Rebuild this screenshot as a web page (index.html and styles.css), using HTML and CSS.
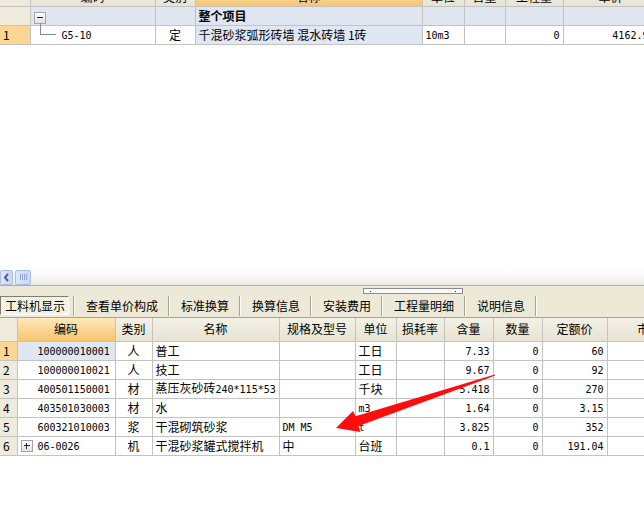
FILE: index.html
```html
<!DOCTYPE html>
<html lang="zh">
<head>
<meta charset="utf-8">
<title>工料机显示</title>
<link rel="stylesheet" href="styles.css">
</head>
<body>
<div class="page">
  <div class="top-pane">
    <table class="grid top-grid">
      <colgroup>
        <col class="w30"><col class="w125"><col class="w40"><col class="w227"><col class="w42"><col class="w41"><col class="w58"><col class="w95">
      </colgroup>
      <tr class="hdr">
        <th class="rn"></th><th>编码</th><th>类别</th><th class="sel">名称</th><th>单位</th><th>含量</th><th>工程量</th><th>单价</th>
      </tr>
      <tr class="group">
        <td class="rn"></td>
        <td class="code"><span class="tbox minus"></span></td>
        <td></td>
        <td class="bold">整个项目</td>
        <td></td><td></td><td></td><td></td>
      </tr>
      <tr>
        <td class="rn cur">1</td>
        <td class="code tree"><span class="elbow"></span><span class="m">G5-10</span></td>
        <td class="c">定</td>
        <td class="blue">千混砂浆弧形砖墙 混水砖墙 1砖</td>
        <td><span class="m">10m3</span></td>
        <td></td>
        <td class="r"><span class="m">0</span></td>
        <td class="r"><span class="m">4162.95</span></td>
      </tr>
    </table>
  </div>

  <div class="hscroll">
    <span class="sbtn"><svg width="7" height="9" viewBox="0 0 7 9"><path d="M5 1 L2 4.5 L5 8" fill="none" stroke="#4d6185" stroke-width="2"/></svg></span>
    <span class="sthumb"><i></i><i></i><i></i><i></i></span>
  </div>

  <div class="tabs">
    <span class="splitter"><i></i><i></i></span>
    <div class="tab first"><span class="active">工料机显示</span></div>
    <div class="tab">查看单价构成</div>
    <div class="tab">标准换算</div>
    <div class="tab">换算信息</div>
    <div class="tab">安装费用</div>
    <div class="tab">工程量明细</div>
    <div class="tab">说明信息</div>
  </div>

  <div class="bottom-pane">
    <table class="grid bot-grid">
      <colgroup>
        <col class="w17"><col class="w98"><col class="w37"><col class="w127"><col class="w76"><col class="w41"><col class="w48"><col class="w49"><col class="w49"><col class="w65"><col class="w96">
      </colgroup>
      <tr class="hdr">
        <th class="rn"></th><th class="sel">编码</th><th>类别</th><th>名称</th><th>规格及型号</th><th>单位</th><th>损耗率</th><th>含量</th><th>数量</th><th>定额价</th><th>市场价</th>
      </tr>
      <tr>
        <td class="rn cur">1</td><td class="code blue"><span class="m">100000010001</span></td><td class="c">人</td><td>普工</td><td></td><td>工日</td><td></td><td class="r"><span class="m">7.33</span></td><td class="r"><span class="m">0</span></td><td class="r"><span class="m">60</span></td><td></td>
      </tr>
      <tr>
        <td class="rn">2</td><td class="code"><span class="m">100000010021</span></td><td class="c">人</td><td>技工</td><td></td><td>工日</td><td></td><td class="r"><span class="m">9.67</span></td><td class="r"><span class="m">0</span></td><td class="r"><span class="m">92</span></td><td></td>
      </tr>
      <tr>
        <td class="rn">3</td><td class="code"><span class="m">400501150001</span></td><td class="c">材</td><td>蒸压灰砂砖<span class="m">240*115*53</span></td><td></td><td>千块</td><td></td><td class="r"><span class="m">5.418</span></td><td class="r"><span class="m">0</span></td><td class="r"><span class="m">270</span></td><td></td>
      </tr>
      <tr>
        <td class="rn">4</td><td class="code"><span class="m">403501030003</span></td><td class="c">材</td><td>水</td><td></td><td><span class="m">m3</span></td><td></td><td class="r"><span class="m">1.64</span></td><td class="r"><span class="m">0</span></td><td class="r"><span class="m">3.15</span></td><td></td>
      </tr>
      <tr>
        <td class="rn">5</td><td class="code"><span class="m">600321010003</span></td><td class="c">浆</td><td>干混砌筑砂浆</td><td><span class="m">DM M5</span></td><td><span class="m">t</span></td><td></td><td class="r"><span class="m">3.825</span></td><td class="r"><span class="m">0</span></td><td class="r"><span class="m">352</span></td><td></td>
      </tr>
      <tr>
        <td class="rn">6</td><td class="code plus-row"><span class="tbox plus"></span><span class="m">06-0026</span></td><td class="c">机</td><td>干混砂浆罐式搅拌机</td><td>中</td><td>台班</td><td></td><td class="r"><span class="m">0.1</span></td><td class="r"><span class="m">0</span></td><td class="r"><span class="m">191.04</span></td><td></td>
      </tr>
    </table>
  </div>

  <svg class="arrow" width="644" height="530" viewBox="0 0 644 530">
    <polygon points="336,428 353,411 355.5,416.2 494.8,374.4 495.3,375.6 358.6,426 360.5,432" fill="#ff0d0d"/>
  </svg>
</div>
</body>
</html>
```

FILE: styles.css
```css
* { box-sizing: border-box; }

body {
  margin: 0;
  background: #fff;
  font-family: "Noto Sans CJK SC", "Noto Sans", sans-serif;
  font-size: 12px;
  color: #000;
}

.page {
  position: relative;
  width: 644px;
  height: 530px;
  overflow: hidden;
}

/* ---------- grids ---------- */
.grid {
  border-collapse: collapse;
  table-layout: fixed;
}

.grid th,
.grid td {
  border: 1px solid #c3c3c3;
  padding: 0 3px;
  height: 19px;
  line-height: 16px;
  white-space: nowrap;
  overflow: hidden;
  font-weight: normal;
  text-align: left;
  vertical-align: middle;
}

.grid th {
  text-align: center;
  background: linear-gradient(#f3f1e6, #e6e3d2);
}

.grid th.sel {
  background: linear-gradient(#fee8bd, #f6c46c);
}

.grid .rn {
  border-left: 0;
  background: #eeebdc;
  padding-left: 3px;
}

.grid .rn.cur {
  background: #fdd694;
}

.grid .c { text-align: center; }
.grid .r { text-align: right; }
.grid .blue { background: #dfe7f3; }
.grid .bold { font-weight: bold; }

.m {
  font-family: "DejaVu Sans Mono", "Liberation Mono", monospace;
  font-size: 10px;
}

col.w17 { width: 17px; }
col.w30 { width: 30px; }
col.w37 { width: 37px; }
col.w40 { width: 40px; }
col.w41 { width: 41px; }
col.w42 { width: 42px; }
col.w48 { width: 48px; }
col.w49 { width: 49px; }
col.w58 { width: 58px; }
col.w65 { width: 65px; }
col.w76 { width: 76px; }
col.w95 { width: 95px; }
col.w96 { width: 96px; }
col.w98 { width: 98px; }
col.w125 { width: 125px; }
col.w127 { width: 127px; }
col.w227 { width: 227px; }

/* ---------- top pane ---------- */
.top-pane {
  height: 269px;
  overflow: hidden;
}

.top-grid {
  width: 658px;
  margin-top: -13px;
}

.top-grid tr.group td { background: #dfe6f0; }
.top-grid tr.group td.rn { background: #eeebdc; }

.top-grid td.tree {
  position: relative;
  padding-left: 31px;
  overflow: visible;
}

.elbow {
  position: absolute;
  left: 9px;
  top: -3px;
  width: 16px;
  height: 12px;
  border-left: 1px solid #8a8a8a;
  border-bottom: 1px solid #8a8a8a;
}

.tbox {
  display: inline-block;
  position: relative;
  width: 12px;
  height: 12px;
  border: 1px solid #a4a4a4;
  background: linear-gradient(#ffffff, #e2e2e2);
  vertical-align: middle;
}

.tbox::before {
  content: "";
  position: absolute;
  left: 2px;
  top: 4px;
  width: 6px;
  height: 1px;
  background: #222;
}

.tbox.plus::after {
  content: "";
  position: absolute;
  left: 4px;
  top: 2px;
  width: 1px;
  height: 6px;
  background: #222;
}

/* ---------- horizontal scrollbar ---------- */
.hscroll {
  height: 17px;
  display: flex;
  align-items: center;
  gap: 2px;
  background: linear-gradient(#ffffff, #f6f5f0 60%, #ecebe4);
  border-bottom: 1px solid #9cb0c8;
}

.sbtn,
.sthumb {
  height: 15px;
  border: 1px solid #a9bde6;
  border-radius: 2px;
  background: linear-gradient(90deg, #dde7fc, #c6d6fb);
  display: flex;
  align-items: center;
  justify-content: center;
}

.sbtn { width: 13px; }

.sthumb {
  width: 16px;
  gap: 1px;
}

.sthumb i {
  display: block;
  width: 1px;
  height: 6px;
  background: #8ea6d8;
}

/* ---------- tabs ---------- */
.tabs {
  position: relative;
  height: 32px;
  background: #ece9d8;
  border-bottom: 1px solid #8fa5bf;
  display: flex;
  align-items: flex-end;
  padding-bottom: 1px;
}

.tab {
  height: 20px;
  line-height: 19px;
  padding: 0 10px 0 11px;
  border-right: 1px solid #a6a493;
  box-shadow: 1px 0 0 #fbfaf5;
  margin-right: 1px;
  white-space: nowrap;
}

.tab.first {
  width: 74px;
  padding: 0;
}

.tab .active {
  display: block;
  width: 69px;
  height: 19px;
  padding-left: 4px;
  border: 1px solid;
  border-color: #7f7d72 #ffffff #ffffff #7f7d72;
  background-color: #f7f6f0;
  background-image: repeating-conic-gradient(#ffffff 0 25%, #ece9d8 0 50%);
  background-size: 2px 2px;
  line-height: 17px;
}

.splitter {
  position: absolute;
  left: 363px;
  top: 2px;
  width: 100px;
  height: 6px;
  border: 1px solid #8d8d8d;
  background: #f8f8f6;
  display: flex;
  justify-content: space-between;
  align-items: center;
  padding: 0 6px;
}

.splitter i {
  display: block;
  width: 1px;
  height: 1px;
  background: #1b2f8f;
}

/* ---------- bottom pane ---------- */
.bottom-pane {
  overflow: hidden;
}

.bot-grid {
  width: 703px;
}

.bot-grid th {
  height: 23px;
  border-top: 0;
}

.bot-grid td.code { padding-left: 20px; }
.bot-grid td.plus-row { padding-left: 3px; }
.bot-grid td.plus-row .tbox { margin-right: 5px; }

/* ---------- annotation ---------- */
.arrow {
  position: absolute;
  left: 0;
  top: 0;
  pointer-events: none;
}
```
